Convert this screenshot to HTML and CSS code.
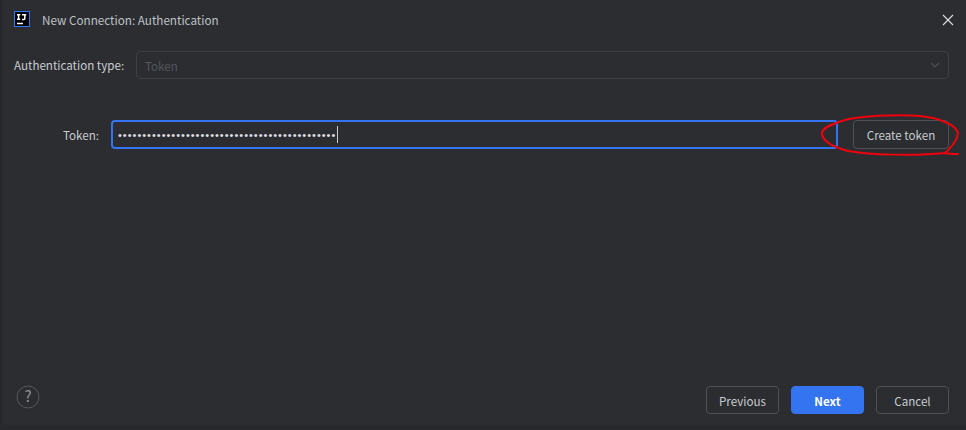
FILE: index.html
```html
<!DOCTYPE html>
<html lang="en">
<head>
<meta charset="utf-8">
<title>New Connection: Authentication</title>
<link rel="stylesheet" href="styles.css">
</head>
<body>
<div class="dialog">
  <header class="titlebar">
    <svg class="logo" width="16" height="16" viewBox="0 0 16 16">
      <rect x="0.5" y="0.5" width="15" height="15" fill="#000" stroke="#2f7bf5"/>
      <path d="M3 3.7h3.2M4.6 3.7v4.6M3 8.3h3.2M8 3.7h4.2M10.8 3.7v3.8q0 1-1 1H8M3 12.4h6" stroke="#fff" stroke-width="1.5" fill="none"/>
    </svg>
    <span class="title">New Connection: Authentication</span>
    <svg class="close" width="12" height="12" viewBox="0 0 12 12">
      <path d="M1 1l10 10M11 1L1 11" stroke="#dfe1e5" stroke-width="1.1" fill="none"/>
    </svg>
  </header>
  <div class="type-row">
    <span class="label">Authentication type:</span>
    <div class="combo">
      <span class="combo-value">Token</span>
      <svg width="10" height="6" viewBox="0 0 10 6"><path d="M1 1l4 4 4-4" stroke="#4e5157" stroke-width="1.1" fill="none"/></svg>
    </div>
  </div>
  <div class="token-row">
    <span class="label token-label">Token:</span>
    <div class="field"><span class="dots">•••••••••••••••••••••••••••••••••••••••••••••</span><i class="caret"></i></div>
    <button class="btn create">Create token</button>
  </div>
  <footer class="footer">
    <svg class="help" width="24" height="24" viewBox="0 0 24 24">
      <circle cx="12" cy="12" r="11" stroke="#55585e" fill="none"/>
      <text x="12" y="17" text-anchor="middle" class="help-mark">?</text>
    </svg>
    <div class="actions">
      <button class="btn action">Previous</button>
      <button class="btn action primary">Next</button>
      <button class="btn action">Cancel</button>
    </div>
  </footer>
  <div class="bottom-band"></div>
  <svg class="scribble" width="966" height="430" viewBox="0 0 966 430">
    <path d="M958 154 C952 154 948 154 945 153 C949 149 957 143 958 133 C956 125 940 118 920 116 C895 114 860 116 845 120 C832 124 821 128 822 134 C823 141 833 147 848 151 C870 155 915 156 945 153" stroke="#f0000c" stroke-width="2" fill="none" stroke-linejoin="round" stroke-linecap="round"/>
  </svg>
</div>
</body>
</html>
```
FILE: styles.css
```css
* { box-sizing: border-box; }
html, body { margin: 0; height: 100%; }
body { background: #2b2d30; overflow: hidden; }
.dialog {
  position: relative;
  width: 966px;
  height: 430px;
  background: #2b2d30;
  border-left: 2px solid #25272a;
  display: flex;
  flex-direction: column;
  font: 11.6px "Noto Sans CJK KR", "Open Sans", sans-serif;
  color: #c9ccd1;
}
.titlebar {
  display: flex;
  align-items: center;
  height: 40px;
  padding: 0 12px 0 12px;
}
.logo { margin-right: 12px; margin-top: -2px; }
.title { flex: 1; color: #bfc2c7; font-size: 11.7px; padding-bottom: 2px; }
.type-row {
  display: flex;
  align-items: center;
  height: 28px;
  margin-top: 11px;
  padding: 0 17px 0 12px;
}
.label { white-space: nowrap; }
.type-row .label { width: 122px; }
.combo {
  flex: 1;
  height: 28px;
  border: 1px solid #3c3f44;
  border-radius: 4px;
  display: flex;
  align-items: center;
  justify-content: space-between;
  padding: 0 8px;
  color: #53565c;
}
.combo-value { padding-top: 1px; }
.token-row {
  display: flex;
  align-items: center;
  height: 29px;
  margin-top: 41px;
  padding: 0 17px 0 0;
}
.token-label { width: 97px; text-align: right; margin-right: 12px; }
.field {
  width: 727px;
  height: 29px;
  border: 2px solid #3574f0;
  border-radius: 4px;
  display: flex;
  align-items: center;
  padding-left: 5px;
  margin-right: 15px;
}
.dots { font: 11px "Liberation Sans", sans-serif; letter-spacing: 1px; color: #dcdee2; }
.caret { width: 1px; height: 17px; background: #c9ccd1; margin-left: 1px; }
.btn {
  font: inherit;
  color: #c9ccd1;
  background: transparent;
  border: 1px solid #4e5157;
  border-radius: 4px;
  height: 28px;
  width: 73px;
  padding: 0;
}
.action { padding-top: 2px; }
.create { width: 96px; height: 29px; }
.footer {
  display: flex;
  align-items: center;
  justify-content: space-between;
  margin-top: auto;
  height: 28px;
  margin-bottom: 11px;
  padding: 0 17px 0 14px;
}
.help { margin-bottom: 6px; }
.help-mark { font: 15px "Noto Sans CJK KR", sans-serif; fill: #8f9297; }
.actions { display: flex; gap: 12px; }
.primary {
  background: #3574f0;
  border-color: #3574f0;
  color: #fff;
  font-weight: 700;
}
.bottom-band { height: 5px; background: #27292c; margin-left: -2px; }
.scribble { position: absolute; left: -2px; top: 0; pointer-events: none; }
```
